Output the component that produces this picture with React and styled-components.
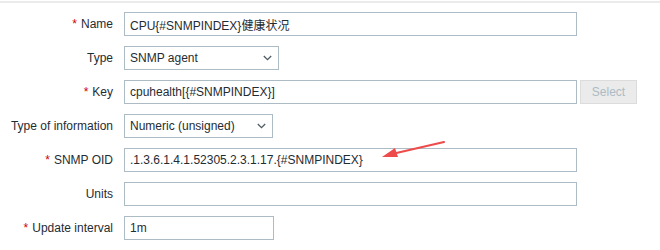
import React from "react";
import styled, { createGlobalStyle } from "styled-components";

const Global = createGlobalStyle`
  html, body { margin: 0; padding: 0; background: #ffffff; }
  body { font-family: "Liberation Sans", Arial, sans-serif; font-size: 12px; color: #1f2c33; }
`;

const Page = styled.div`
  position: relative;
  width: 660px;
  height: 250px;
  border-top: 2px solid #ebebeb;
  margin-top: 1px;
  box-sizing: border-box;
  overflow: hidden;
`;

const Form = styled.div`
  display: grid;
  grid-template-columns: 113px 1fr;
  column-gap: 11px;
  row-gap: 10px;
  padding-top: 9px;
  align-items: center;
`;

const Label = styled.label`
  text-align: right;
  white-space: nowrap;
  font-size: 12px;
  color: #1f2c33;
`;

const Req = styled.span`
  color: #d40000;
  margin-right: 4px;
`;

const Field = styled.div`
  display: flex;
  align-items: center;
  gap: 3px;
`;

const Input = styled.div`
  box-sizing: border-box;
  width: ${(p) => p.$w}px;
  height: 24px;
  border: 1px solid #acbbc4;
  background: #fff;
  padding: 0 5px;
  display: flex;
  align-items: center;
  font-size: 12px;
  color: #1f2c33;
  white-space: nowrap;
  font-family: "Liberation Sans", "Noto Sans CJK SC", Arial, sans-serif;
`;

const Select = styled(Input)`
  justify-content: space-between;
  padding-right: 6px;
`;

const Button = styled.div`
  box-sizing: border-box;
  width: 57px;
  height: 24px;
  border: 1px solid #dcdcdc;
  background: #ebebeb;
  color: #acbbc4;
  display: flex;
  align-items: center;
  justify-content: center;
  font-size: 12px;
`;

const Arrow = styled.svg`
  position: absolute;
  left: 0;
  top: -3px;
  pointer-events: none;
`;

const Chevron = () => (
  <svg width="9" height="6" viewBox="0 0 9 6">
    <path d="M0.8 1 L4.5 4.6 L8.2 1" fill="none" stroke="#4e5b63" strokeWidth="1.3" />
  </svg>
);

const rows = [
  { label: "Name", req: true, el: <Input $w={453}>CPU{"{#SNMPINDEX}"}健康状况</Input> },
  { label: "Type", el: <Select $w={155}>SNMP agent<Chevron /></Select> },
  {
    label: "Key",
    req: true,
    el: (
      <>
        <Input $w={453}>cpuhealth[{"{#SNMPINDEX}"}]</Input>
        <Button>Select</Button>
      </>
    ),
  },
  { label: "Type of information", el: <Select $w={149}>Numeric (unsigned)<Chevron /></Select> },
  { label: "SNMP OID", req: true, el: <Input $w={453}>.1.3.6.1.4.1.52305.2.3.1.17.{"{#SNMPINDEX}"}</Input> },
  { label: "Units", el: <Input $w={453}></Input> },
  { label: "Update interval", req: true, el: <Input $w={150}>1m</Input> },
];

export default function App() {
  return (
    <>
      <Global />
      <Page>
        <Form>
          {rows.map((r) => (
            <React.Fragment key={r.label}>
              <Label>
                {r.req && <Req>*</Req>}
                {r.label}
              </Label>
              <Field>{r.el}</Field>
            </React.Fragment>
          ))}
        </Form>
        <Arrow width="660" height="250" viewBox="0 0 660 250">
          <line x1="444" y1="142" x2="392" y2="154" stroke="#ee4b4b" strokeWidth="2.2" strokeLinecap="round" />
          <polygon points="382,157 395,148 398,157" fill="#ee4b4b" />
        </Arrow>
      </Page>
    </>
  );
}
